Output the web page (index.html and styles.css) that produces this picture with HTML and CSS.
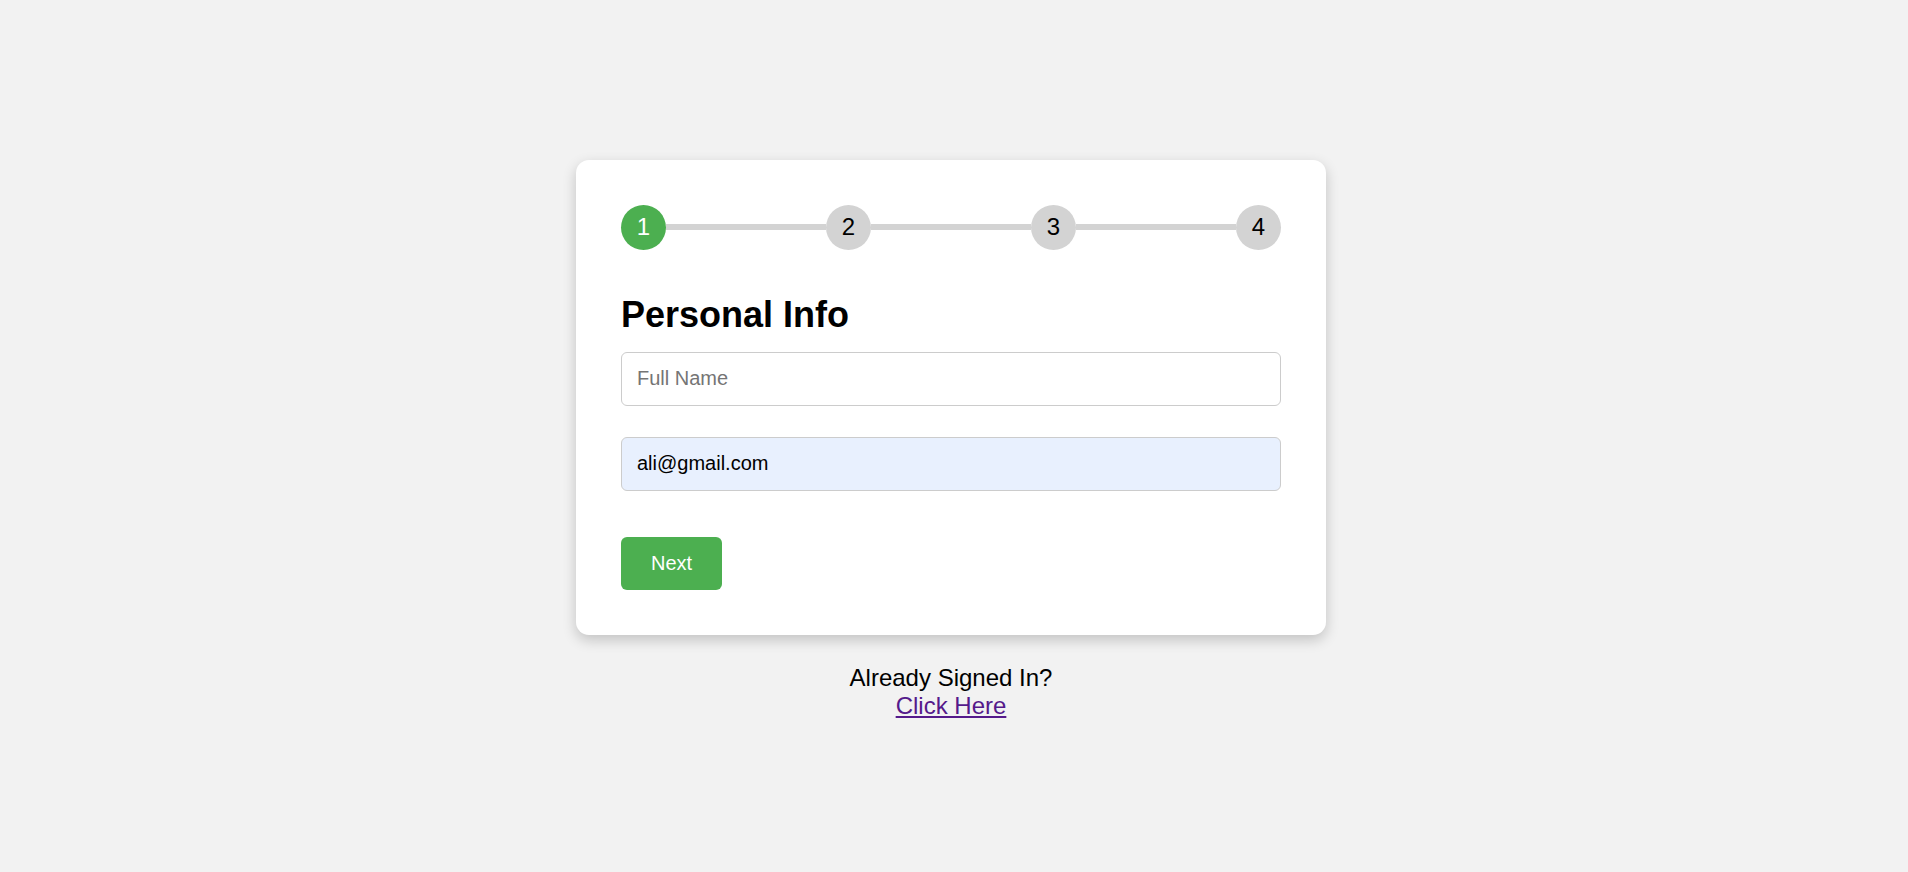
FILE: index.html
```html
<!DOCTYPE html>
<html lang="en">
<head>
<meta charset="utf-8">
<title>Sign Up</title>
<link rel="stylesheet" href="styles.css">
</head>
<body>
<main class="page">
  <section class="card">
    <div class="stepper">
      <span class="step active">1</span>
      <span class="bar"></span>
      <span class="step">2</span>
      <span class="bar"></span>
      <span class="step">3</span>
      <span class="bar"></span>
      <span class="step">4</span>
    </div>
    <h2 class="title">Personal Info</h2>
    <form class="form">
      <input class="field" type="text" placeholder="Full Name">
      <input class="field autofill" type="email" value="ali@gmail.com">
      <button class="next" type="button">Next</button>
    </form>
  </section>
  <p class="signin">Already Signed In?<br><a class="link" href="#">Click Here</a></p>
</main>
</body>
</html>
```

FILE: styles.css
```css
html, body {
  margin: 0;
  padding: 0;
}
body {
  background: #f2f2f2;
  font-family: "Liberation Sans", Arial, sans-serif;
  color: #000;
}
.page {
  height: 100vh;
  box-sizing: border-box;
  padding-right: 6px;
  display: flex;
  flex-direction: column;
  align-items: center;
  justify-content: center;
}
.card {
  width: 750px;
  box-sizing: border-box;
  padding: 45px;
  background: #fff;
  border-radius: 13px;
  box-shadow: 0 5px 14px rgba(0, 0, 0, 0.2);
  margin-top: 7px;
}
.stepper {
  display: flex;
  align-items: center;
}
.step {
  width: 45px;
  height: 45px;
  flex: none;
  border-radius: 50%;
  background: #d3d3d3;
  color: #000;
  font-size: 24px;
  display: flex;
  align-items: center;
  justify-content: center;
}
.step.active {
  background: #4caf50;
  color: #fff;
}
.bar {
  flex: 1;
  height: 6px;
  background: #d3d3d3;
}
.title {
  font-size: 36px;
  font-weight: bold;
  line-height: 41px;
  margin: 44px 0 17px;
}
.form {
  display: flex;
  flex-direction: column;
  align-items: flex-start;
}
.field {
  width: 100%;
  box-sizing: border-box;
  height: 54px;
  padding: 15px;
  border: 1px solid #ccc;
  border-radius: 6px;
  font-family: inherit;
  font-size: 20px;
  color: #000;
  background: #fff;
  margin: 0 0 31px;
  outline: none;
}
.field::placeholder {
  color: #757575;
}
.field.autofill {
  background: #e8f0fe;
  margin-bottom: 46px;
}
.next {
  background: #4caf50;
  color: #fff;
  border: none;
  border-radius: 6px;
  font-family: inherit;
  font-size: 20px;
  line-height: 23px;
  padding: 15px 30px;
  cursor: pointer;
}
.signin {
  margin: 29px 0 0;
  font-size: 24px;
  line-height: normal;
  text-align: center;
}
.link {
  color: #551a8b;
  text-decoration: underline;
}
```
